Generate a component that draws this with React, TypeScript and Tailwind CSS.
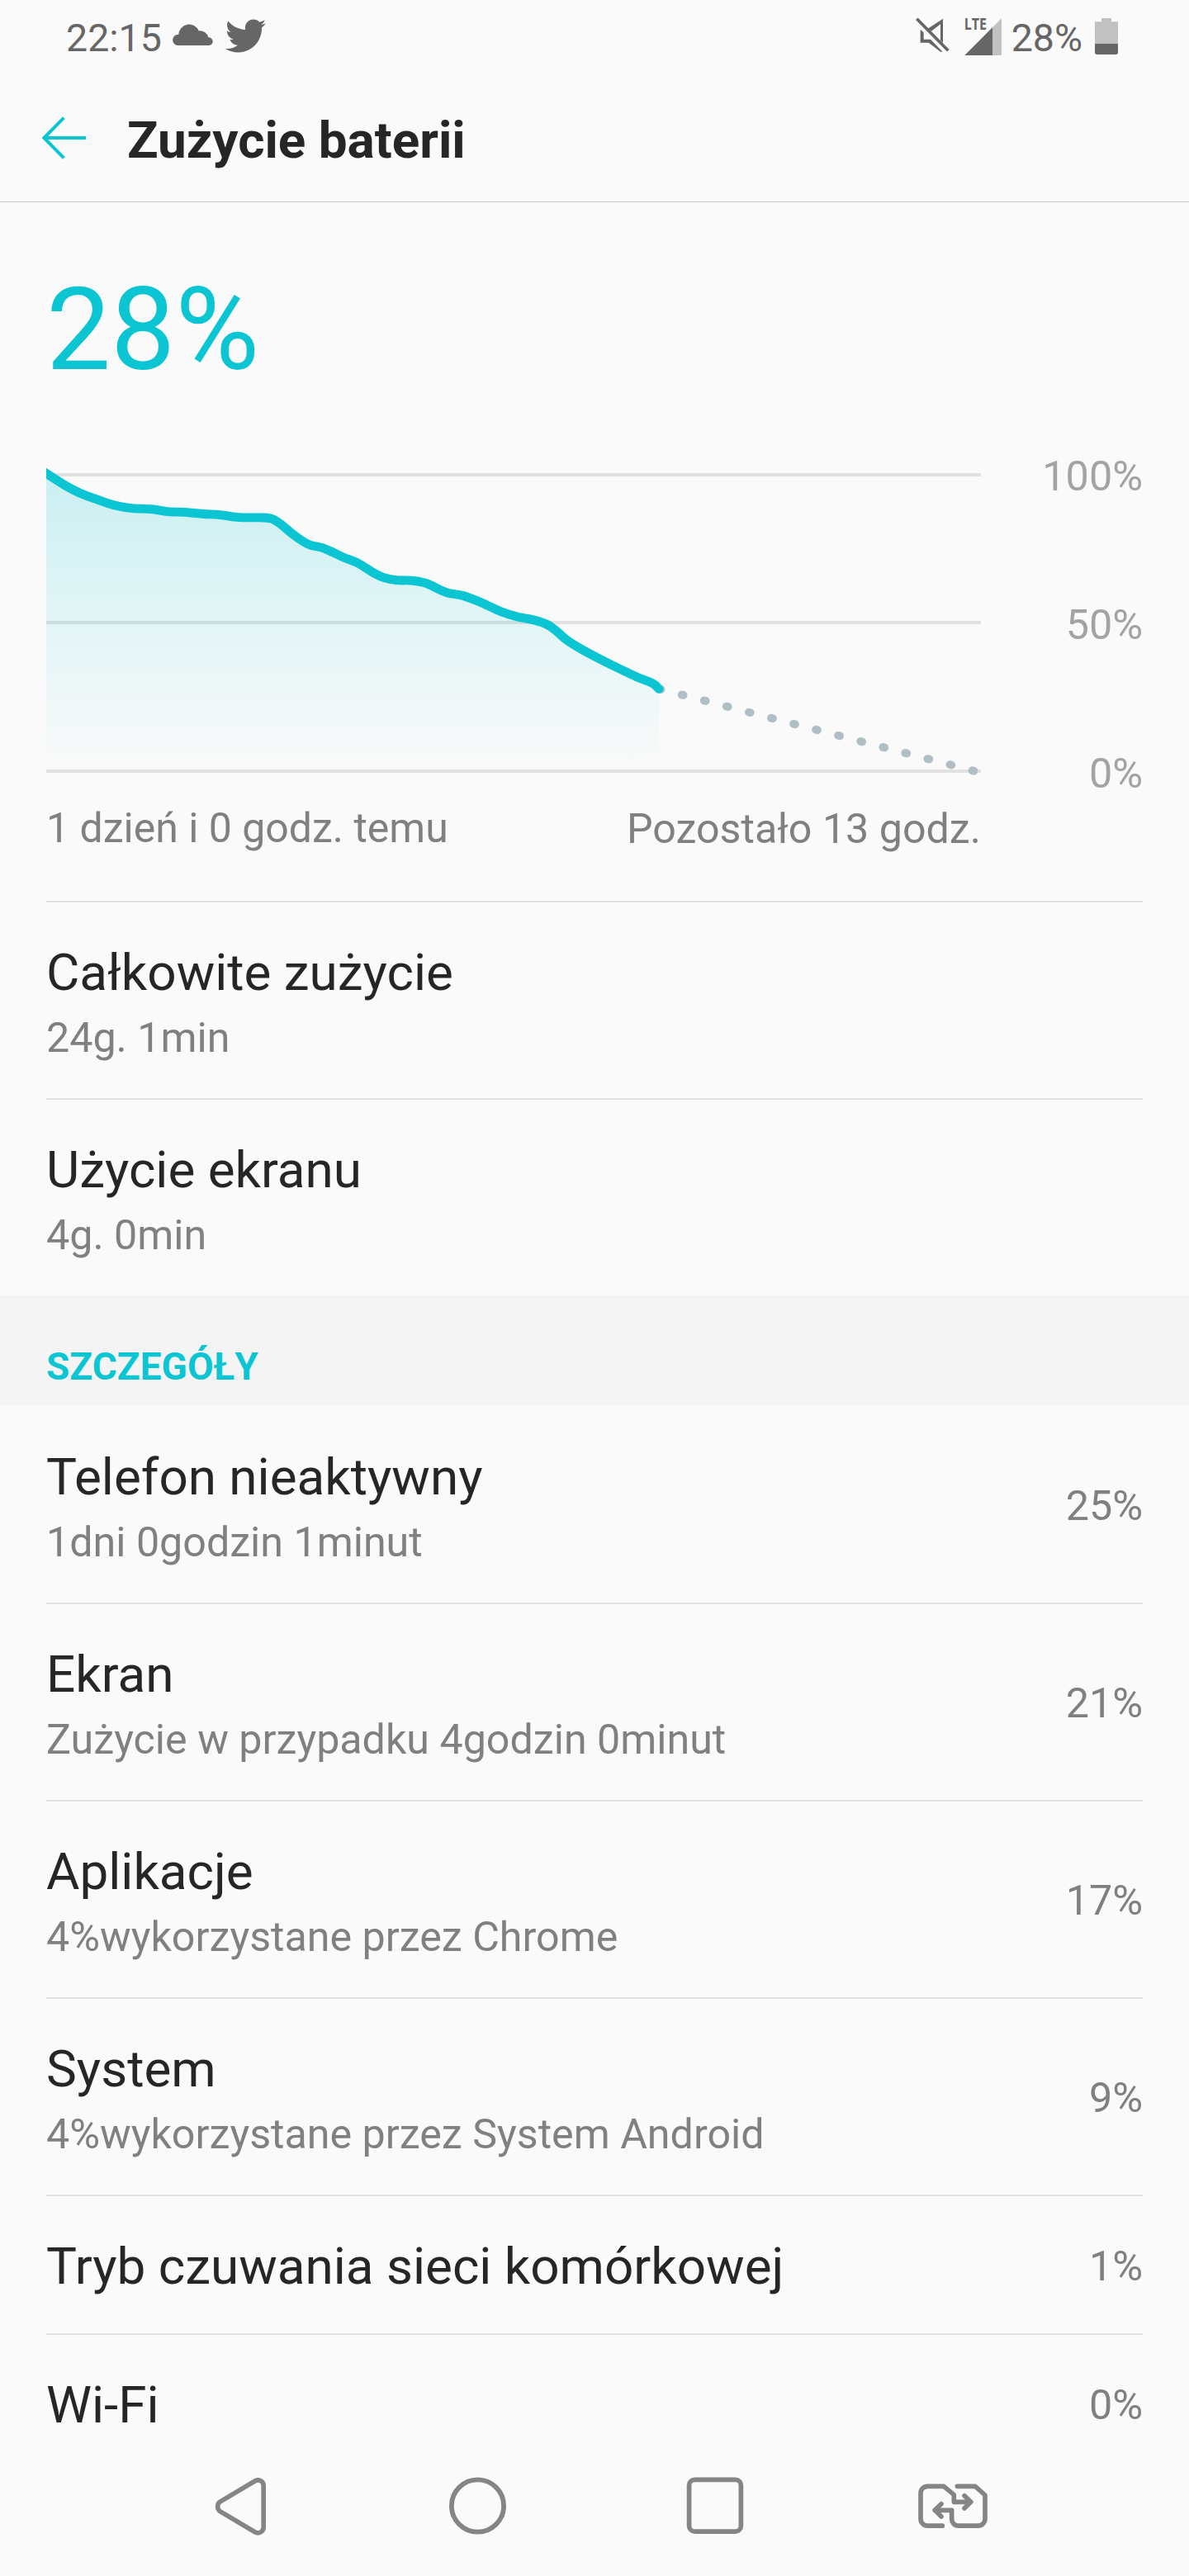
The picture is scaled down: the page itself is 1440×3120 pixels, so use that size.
import { FaTwitter } from 'react-icons/fa';

type Row = { title: string; sub?: string; value?: string };

const summary: Row[] = [
  { title: 'Całkowite zużycie', sub: '24g. 1min' },
  { title: 'Użycie ekranu', sub: '4g. 0min' },
];

const details: Row[] = [
  { title: 'Telefon nieaktywny', sub: '1dni 0godzin 1minut', value: '25%' },
  { title: 'Ekran', sub: 'Zużycie w przypadku 4godzin 0minut', value: '21%' },
  { title: 'Aplikacje', sub: '4%wykorzystane przez Chrome', value: '17%' },
  { title: 'System', sub: '4%wykorzystane przez System Android', value: '9%' },
  { title: 'Tryb czuwania sieci komórkowej', value: '1%' },
  { title: 'Wi-Fi', value: '0%' },
];

// battery level samples, x = time, y = level (chart space)
const points: [number, number][] = [
  [50, 569], [56, 573.3], [80, 588.5], [100, 598.6], [130, 609.3], [143.3, 613], [160, 615.6], [183.3, 616.7],
  [203.3, 619.6], [226.7, 620.6], [246.7, 622.5], [266.7, 623.6], [290, 626.7], [320, 627],
  [330, 628.7], [340, 634.8], [353.3, 646], [366.7, 655.5], [376, 660.3], [390, 663.3], [403.3, 669],
  [416.7, 675.4], [433.3, 682], [453.3, 694.3], [465, 699.7], [480, 702.7], [500, 703.3], [516.7, 706.7],
  [540, 717.3], [561.7, 721.7], [583.3, 730], [606.7, 740.7], [626.7, 747], [646.7, 751], [661.7, 756],
  [673, 763.5], [686.7, 775.4], [706.7, 787.7], [740, 805], [770, 819.3], [790, 827.5], [798, 834.3],
];

const smooth = (pts: [number, number][]) => {
  let d = `M${pts[0][0]} ${pts[0][1]}`;
  for (let i = 0; i < pts.length - 1; i++) {
    const a = pts[i - 1] ?? pts[i];
    const b = pts[i];
    const c = pts[i + 1];
    const e = pts[i + 2] ?? c;
    d += `C${b[0] + (c[0] - a[0]) / 6} ${b[1] + (c[1] - a[1]) / 6} ${c[0] - (e[0] - b[0]) / 6} ${c[1] - (e[1] - b[1]) / 6} ${c[0]} ${c[1]}`;
  }
  return d;
};

const linePath = smooth(points);

function StatusBar() {
  return (
    <div className="flex h-[92px] items-center justify-between pr-[86px] pl-[80px] text-[46.5px] leading-[56px] text-[#666666]">
      <div className="flex items-center">
        <span>22:15</span>
        <svg className="-mt-[9px] ml-[13px] h-[27px] w-[49px]" viewBox="627 84 147 81" fill="currentColor">
          <path d="M646 165A19.500 19.500 0 0 1 649 125A38 38 0 0 1 722 112A32 32 0 0 1 757 136A14.500 14.500 0 0 1 760 165Z" />
        </svg>
        <FaTwitter className="-mt-[5px] ml-[15px] size-[49px]" />
      </div>
      <div className="flex items-center">
        <svg className="-mt-[8px] h-[42px] w-[42px]" viewBox="86 63 126 126" fill="none">
          <path d="M130 104L185 68V156L176 147V88L143 113Z" fill="currentColor" />
          <path d="M103 107L115 118V143H140L184 188H176L133 155H103Z" fill="currentColor" />
          <path d="M90 68L204 184" stroke="currentColor" strokeWidth="11" />
        </svg>
        <svg className="-mt-[9px] ml-[17px] h-[50px] w-[45px] overflow-visible" viewBox="261 48 135 150">
          <path d="M262 198L396 64V198Z" fill="#c1c1c1" />
          <path d="M262 198L363 97V198Z" fill="#666666" />
          <text
            x="260"
            y="106"
            textLength="82"
            lengthAdjust="spacingAndGlyphs"
            className="fill-[#666666] font-['Open_Sans',sans-serif] text-[56px] font-bold"
          >
            LTE
          </text>
        </svg>
        <span className="ml-[12px]">28%</span>
        <svg className="-mt-[4px] ml-[15px] h-[44px] w-[28px]" viewBox="738 66 84 132">
          <path d="M738 79H762V66H798V79H822V160H738Z" fill="#c1c1c1" />
          <path d="M738 159H822V190a8 8 0 0 1-8 8H746a8 8 0 0 1-8-8Z" fill="#666666" />
        </svg>
      </div>
    </div>
  );
}

function Chart() {
  return (
    <svg className="h-[419px] w-[1132px]" viewBox="56 547 1132 419" fill="none">
      <defs>
        <linearGradient id="level" x1="0" x2="0" y1="573" y2="932" gradientUnits="userSpaceOnUse">
          <stop offset="0" stopColor="#0bc5d3" stopOpacity="0.2" />
          <stop offset="1" stopColor="#0bc5d3" stopOpacity="0" />
        </linearGradient>
      </defs>
      <path d="M56 575H1188M56 754H1188M56 934H1188" stroke="#e1e1e1" strokeWidth="4" />
      <path d={`${linePath}V934H50Z`} fill="url(#level)" />
      <path d="M798.6 834.4L1188 935.9" stroke="#b0bec5" strokeWidth="9.8" strokeLinecap="round" strokeDasharray="2 25.970" />
      <path d={linePath} stroke="#0bc5d3" strokeWidth="10.8" strokeLinecap="round" strokeLinejoin="round" />
    </svg>
  );
}

function ListRow({ title, sub, value, first }: Row & { first?: boolean }) {
  return (
    <div
      className={`mx-[56px] flex items-center justify-between border-t-2 ${first ? 'border-transparent' : 'border-[#e1e1e1]'} ${sub ? 'h-[239px]' : 'h-[168px]'}`}
    >
      <div className={`flex h-full flex-col pt-[48px] ${sub ? 'gap-[13px]' : ''}`}>
        <span className="text-[62px] leading-[73px] text-[#262626]">{title}</span>
        {sub && <span className="text-[50.2px] leading-[59px] text-[#808080]">{sub}</span>}
      </div>
      {value && <span className="mt-[2px] text-[50.3px] leading-[59px] text-[#808080]">{value}</span>}
    </div>
  );
}

function NavBar() {
  return (
    <nav className="flex h-[168px] items-center bg-[#fafafa] pl-[146px] text-[#858585]">
      <div className="flex w-[288px] justify-center">
        <svg className="h-[80px] w-[80px]" viewBox="90 105 240 240" fill="none" stroke="currentColor" strokeWidth="17">
          <path d="M138 208L266 132Q279 125 290 133Q297.500 139 297.500 149V300Q297.500 310 290 316Q279 324 266 317L138 241Q131 236 131 224.500Q131 213 138 208Z" />
        </svg>
      </div>
      <div className="flex w-[288px] justify-center">
        <svg className="h-[80px] w-[80px]" viewBox="0 0 80 80" fill="none" stroke="currentColor" strokeWidth="5.8">
          <circle cx="40.5" cy="39" r="31.6" />
        </svg>
      </div>
      <div className="flex w-[288px] justify-center">
        <svg className="h-[80px] w-[80px]" viewBox="0 0 80 80" fill="none" stroke="currentColor" strokeWidth="5.7">
          <rect x="8.600" y="7.300" width="62.800" height="62.800" rx="6.800" />
        </svg>
      </div>
      <div className="flex w-[288px] justify-center">
        <svg
          className="h-[80px] w-[90px]"
          viewBox="1047 107 270 240"
          fill="none"
          stroke="currentColor"
          strokeWidth="17"
          strokeLinecap="round"
          strokeLinejoin="round"
        >
          <path d="M1144 296.500H1090a25 25 0 0 1-25-25V178a25 25 0 0 1 25-25H1149L1186 184V210H1247" />
          <path d="M1224 187L1247 210L1224 233" />
          <path d="M1198 153H1263L1299 185V272a25 25 0 0 1-25 24.500H1202a24 24 0 0 1-24-24.500V240H1117" />
          <path d="M1140 217L1117 240L1140 263" />
        </svg>
      </div>
    </nav>
  );
}

export default function App() {
  return (
    <div className="flex h-[3120px] w-[1440px] flex-col overflow-hidden bg-[#fafafa] font-[Roboto,sans-serif]">
      <StatusBar />

      <header className="flex h-[153px] items-center border-b border-[#c6cccc] pl-[51px]">
        <svg className="-mt-[2px] h-[52px] w-[53px]" viewBox="153 423 159 156" fill="none" stroke="#0bc5d3" strokeWidth="12">
          <path d="M312 501H160M232 428L160 501L232 574" />
        </svg>
        <h1 className="mt-[2px] ml-[50px] text-[62px] leading-[73px] font-bold text-[#262626]">Zużycie baterii</h1>
      </header>

      <section className="px-[56px] pt-[73px] pb-[58px]">
        <div className="text-[139px] leading-[164px] text-[#0bc5d3]">28%</div>
        <div className="mt-[65px] flex justify-between">
          <Chart />
          <div className="flex h-[419px] flex-col justify-between text-right text-[50.3px] leading-[59px] text-[#a3a3a3]">
            <span>100%</span>
            <span>50%</span>
            <span>0%</span>
          </div>
        </div>
        <div className="mt-[8px] flex w-[1132px] justify-between text-[50px] leading-[59px] text-[#808080]">
          <span>1 dzień i 0 godz. temu</span>
          <span className="text-[50.2px]">Pozostało 13 godz.</span>
        </div>
      </section>

      {summary.map((row) => (
        <ListRow key={row.title} {...row} />
      ))}

      <div className="h-[133px] bg-[#f4f4f4] px-[56px] pt-[59px] text-[46px] leading-[54px] font-bold text-[#0bc5d3]">SZCZEGÓŁY</div>

      {/* the last row runs under the navigation bar */}
      <div className="min-h-0 flex-1 overflow-hidden">
        {details.map((row, i) => (
          <ListRow key={row.title} {...row} first={i === 0} />
        ))}
      </div>

      <NavBar />
    </div>
  );
}
